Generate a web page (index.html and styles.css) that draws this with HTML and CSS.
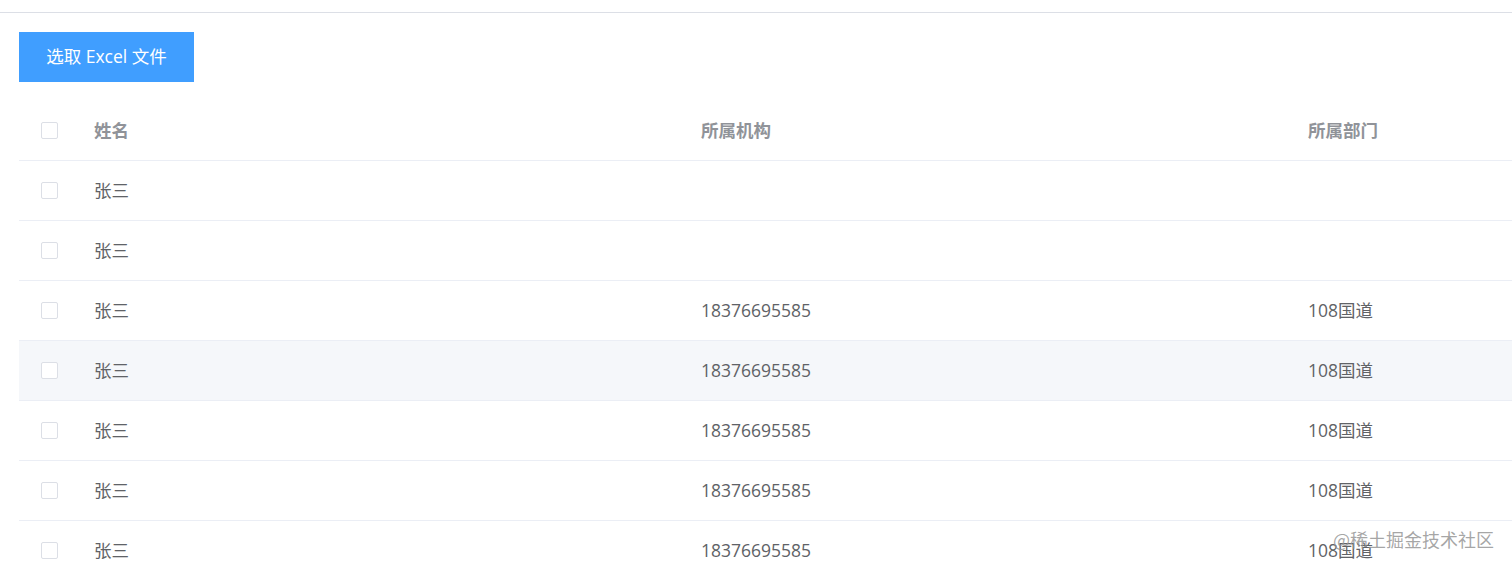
FILE: index.html
```html
<!DOCTYPE html>
<html lang="zh-CN">
<head>
<meta charset="utf-8">
<title>Excel 导入</title>
<link rel="stylesheet" href="styles.css">
</head>
<body>
<div class="topbar"></div>
<main class="content">
  <button class="btn-primary" type="button">选取 Excel 文件</button>
  <div class="table-wrap">
    <table class="data-table">
      <colgroup>
        <col class="col-check">
        <col class="col-main">
        <col class="col-main">
        <col class="col-main">
      </colgroup>
      <thead>
        <tr>
          <th class="cell-check"><span class="checkbox"></span></th>
          <th>姓名</th>
          <th>所属机构</th>
          <th>所属部门</th>
        </tr>
      </thead>
      <tbody>
        <tr><td class="cell-check"><span class="checkbox"></span></td><td>张三</td><td></td><td></td></tr>
        <tr><td class="cell-check"><span class="checkbox"></span></td><td>张三</td><td></td><td></td></tr>
        <tr><td class="cell-check"><span class="checkbox"></span></td><td>张三</td><td>18376695585</td><td>108国道</td></tr>
        <tr class="is-hover"><td class="cell-check"><span class="checkbox"></span></td><td>张三</td><td>18376695585</td><td>108国道</td></tr>
        <tr><td class="cell-check"><span class="checkbox"></span></td><td>张三</td><td>18376695585</td><td>108国道</td></tr>
        <tr><td class="cell-check"><span class="checkbox"></span></td><td>张三</td><td>18376695585</td><td>108国道</td></tr>
        <tr><td class="cell-check"><span class="checkbox"></span></td><td>张三</td><td>18376695585</td><td>108国道</td></tr>
      </tbody>
    </table>
  </div>
</main>
<div class="watermark">@稀土掘金技术社区</div>
</body>
</html>
```

FILE: styles.css
```css
html, body {
  margin: 0;
  padding: 0;
  background: #ffffff;
  overflow: hidden;
  height: 566px;
}

body {
  font-family: "Open Sans", "Noto Sans CJK SC", sans-serif;
  font-size: 17.5px;
  color: #606266;
  position: relative;
}

.topbar {
  height: 12px;
  border-bottom: 1px solid #dcdfe6;
}

.content {
  padding: 19px 0 0 19px;
}

.btn-primary {
  display: block;
  box-sizing: border-box;
  width: 175px;
  height: 50px;
  padding: 0 0 3px;
  border: none;
  border-radius: 0;
  background: #409eff;
  color: #ffffff;
  font-family: "Open Sans", "Noto Sans CJK SC", sans-serif;
  font-size: 17.5px;
  cursor: pointer;
}

.table-wrap {
  margin-top: 19px;
  width: 1900px;
}

.data-table {
  border-collapse: collapse;
  table-layout: fixed;
  width: 1882px;
}

.col-check { width: 61px; }
.col-main { width: 607px; }

.data-table th,
.data-table td {
  height: 57px;
  padding: 0 0 2px 14px;
  text-align: left;
  border-bottom: 1px solid #ebeef5;
  vertical-align: middle;
  white-space: nowrap;
}

.data-table th {
  color: #909399;
  font-weight: 700;
}

.data-table .cell-check {
  padding: 0 0 0 22px;
}

.checkbox {
  display: block;
  width: 15px;
  height: 15px;
  border: 1px solid #dcdfe6;
  border-radius: 2px;
  background: #ffffff;
}

.is-hover td {
  background: #f5f7fa;
}

.watermark {
  position: absolute;
  right: 18px;
  top: 526px;
  font-family: "Noto Sans CJK SC", sans-serif;
  font-size: 18px;
  color: rgba(150, 150, 150, 0.85);
}
```
